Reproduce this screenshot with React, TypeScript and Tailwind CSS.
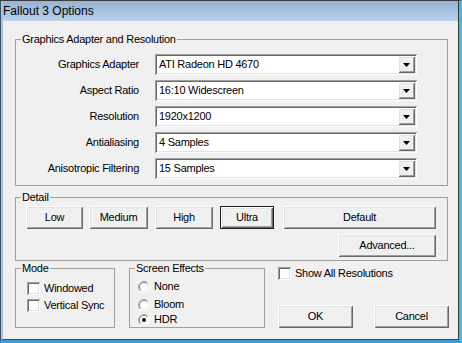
import type { ReactNode } from 'react';

const raised =
  'bg-[#f0f0f0] shadow-[inset_1px_1px_0_#fff,inset_-1px_-1px_0_#696969,inset_2px_2px_0_#e3e3e3,inset_-2px_-2px_0_#a0a0a0]';
const sunken =
  'bg-white shadow-[inset_1px_1px_0_#a0a0a0,inset_-1px_-1px_0_#fff,inset_2px_2px_0_#696969,inset_-2px_-2px_0_#e3e3e3]';

function Button({ label, className = '', isDefault = false }: { label: string; className?: string; isDefault?: boolean }) {
  return (
    <button
      className={`${raised} ${isDefault ? 'border border-[#1e1e1e]' : ''} h-[23px] flex items-center justify-center leading-none ${className}`}
    >
      {label}
    </button>
  );
}

function Combo({ value }: { value: string }) {
  return (
    <div className={`${sunken} w-[262px] h-[21px] flex items-center pl-[4px] pr-[2px] py-[2px]`}>
      <span className="flex-1 leading-none">{value}</span>
      <div className={`${raised} w-[17px] h-full flex items-center justify-center`}>
        <svg width="7" height="4" viewBox="0 0 7 4">
          <path d="M0 0H7L3.5 4Z" fill="#000" />
        </svg>
      </div>
    </div>
  );
}

function Check({ label }: { label: string }) {
  return (
    <div className="flex items-center h-[13px] gap-[4px]">
      <div className={`${sunken} w-[13px] h-[13px]`} />
      <span className="leading-none">{label}</span>
    </div>
  );
}

function Radio({ label, checked = false, id, className = '' }: { label: string; checked?: boolean; id: string; className?: string }) {
  return (
    <div className={`flex items-center h-[13px] gap-[4px] ${className}`}>
      <svg width="12" height="12" viewBox="0 0 12 12">
        <defs>
          <linearGradient id={`o-${id}`} x1="0" y1="0" x2="1" y2="1">
            <stop offset="0.45" stopColor="#a0a0a0" />
            <stop offset="0.55" stopColor="#ffffff" />
          </linearGradient>
          <linearGradient id={`i-${id}`} x1="0" y1="0" x2="1" y2="1">
            <stop offset="0.45" stopColor="#8a8a8a" />
            <stop offset="0.55" stopColor="#e3e3e3" />
          </linearGradient>
        </defs>
        <circle cx="6" cy="6" r="5.5" fill="#fff" stroke={`url(#o-${id})`} strokeWidth="1" />
        <circle cx="6" cy="6" r="4.5" fill="none" stroke={`url(#i-${id})`} strokeWidth="1" />
        {checked && <circle cx="6" cy="6" r="2" fill="#000" />}
      </svg>
      <span className="leading-none">{label}</span>
    </div>
  );
}

function Group({ title, className = '', children }: { title: string; className?: string; children: ReactNode }) {
  return (
    <fieldset className={`border border-[#a0a0a0] ${className}`}>
      <legend className="ml-[5px] px-[1px] leading-[13px]">{title}</legend>
      {children}
    </fieldset>
  );
}

const rows = [
  { label: 'Graphics Adapter', value: 'ATI Radeon HD 4670' },
  { label: 'Aspect Ratio', value: '16:10 Widescreen' },
  { label: 'Resolution', value: '1920x1200' },
  { label: 'Antialiasing', value: '4 Samples' },
  { label: 'Anisotropic Filtering', value: '15 Samples' },
];

export default function App() {
  return (
    <div className="w-[462px] h-[343px] flex flex-col border-t border-l border-r-[3px] border-b-[3px] border-t-[#3b3b3b] border-l-[#3b4f66] border-r-[#45b8e6] border-b-[#3a9ed6] font-['Liberation_Sans',Arial,sans-serif] text-[11px] tracking-[-0.25px] text-black">
      <div className="flex-1 flex flex-col border-r border-b border-l-2 border-r-[#3b3b3b] border-b-[#2f4c6a] border-l-[#a9c4e0] bg-[#f0f0f0]">
        {/* Title bar */}
        <div className="h-[20px] flex items-center bg-linear-to-b from-[#97b3d2] to-[#bad2ea] text-[12px] tracking-normal">
          Fallout 3 Options
        </div>

        <div className="flex-1 flex flex-col pl-[12px]">
          {/* Graphics Adapter and Resolution */}
          <Group title="Graphics Adapter and Resolution" className="mt-[12px] w-[433px]">
            <div className="pt-[8px] pb-[6px] flex flex-col gap-[5px]">
              {rows.map(r => (
                <div key={r.label} className="flex items-center h-[21px]">
                  <span className="w-[123px] text-right">{r.label}</span>
                  <div className="ml-[16px]">
                    <Combo value={r.value} />
                  </div>
                </div>
              ))}
            </div>
          </Group>

          {/* Detail */}
          <Group title="Detail" className="mt-[5px] w-[433px]">
            <div className="pt-[2px] pb-[3px] pl-[10px] w-[420px] flex flex-col">
              <div className="flex">
                <Button label="Low" className="w-[57px]" />
                <Button label="Medium" className="ml-[6px] w-[59px]" />
                <Button label="High" className="ml-[7px] w-[58px]" />
                <Button label="Ultra" className="ml-[7px] w-[54px]" isDefault />
                <Button label="Default" className="ml-[9px] w-[153px]" />
              </div>
              <div className="flex mt-[5px] ml-[312px]">
                <Button label="Advanced..." className="w-[98px]" />
              </div>
            </div>
          </Group>

          {/* Bottom row */}
          <div className="flex mt-[1px]">
            <Group title="Mode" className="w-[100px] h-[66px]">
              <div className="pt-[7px] pl-[11px] flex flex-col gap-[4px]">
                <Check label="Windowed" />
                <Check label="Vertical Sync" />
              </div>
            </Group>

            <Group title="Screen Effects" className="ml-[14px] w-[136px] h-[66px]">
              <div className="pt-[5px] pl-[8px] flex flex-col">
                <Radio id="none" label="None" />
                <Radio id="bloom" label="Bloom" className="mt-[5px]" />
                <Radio id="hdr" label="HDR" checked className="mt-[2px]" />
              </div>
            </Group>

            <div className="ml-[13px] flex flex-col">
              <div className="mt-[5px]">
                <Check label="Show All Resolutions" />
              </div>
              <div className="flex mt-[25px]">
                <Button label="OK" className="w-[75px]" />
                <Button label="Cancel" className="ml-[21px] w-[75px]" />
              </div>
            </div>
          </div>
        </div>
      </div>
    </div>
  );
}
